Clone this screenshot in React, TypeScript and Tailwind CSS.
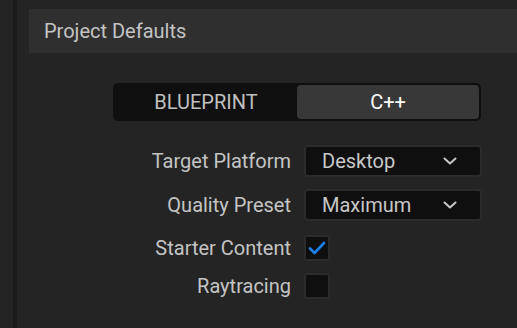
import { useState } from "react";

type Row = { label: string; kind: "select" | "check"; value?: string; checked?: boolean; space: string };

const rows: Row[] = [
  { label: "Target Platform", kind: "select", value: "Desktop", space: "mt-[24px]" },
  { label: "Quality Preset", kind: "select", value: "Maximum", space: "mt-[12px]" },
  { label: "Starter Content", kind: "check", checked: true, space: "mt-[14px]" },
  { label: "Raytracing", kind: "check", checked: false, space: "mt-[12px]" },
];

function Chevron() {
  return (
    <svg width="14" height="8" viewBox="0 0 14 8" fill="none">
      <path d="M1.5 1.5 L7 6.5 L12.5 1.5" stroke="#c8c8c8" strokeWidth="2" strokeLinecap="round" strokeLinejoin="round" />
    </svg>
  );
}

function Check() {
  return (
    <svg width="18" height="14" viewBox="0 0 18 14" fill="none">
      <path d="M2 7.5 L6.5 12 L16 2" stroke="#1a7fe8" strokeWidth="2.6" strokeLinecap="round" strokeLinejoin="round" />
    </svg>
  );
}

export default function App() {
  const [mode, setMode] = useState<"bp" | "cpp">("cpp");

  return (
    <div className="w-[517px] h-[328px] bg-[#242424] flex overflow-hidden font-['Roboto',sans-serif]">
      {/* left gutter */}
      <div className="w-[13px] shrink-0" />
      <div className="w-[4px] shrink-0 bg-[#1b1b1b]" />
      <div className="flex-1 pl-[12px] pt-[9px]">
        {/* Section header */}
        <div className="h-[44px] bg-[#2f2f2f] flex items-center pl-[15px] text-[20px] leading-none text-[#c4c4c4]">
          Project Defaults
        </div>

        {/* Blueprint / C++ toggle */}
        <div className="mt-[30px] ml-[84px] w-[368px] h-[38px] bg-[#0f0f0f] rounded-[5px] flex p-[2px]">
          <button
            onClick={() => setMode("bp")}
            className={`flex-1 rounded-[4px] text-[20px] leading-none ${mode === "bp" ? "bg-[#383838] text-white" : "text-[#c0c0c0]"}`}
          >
            BLUEPRINT
          </button>
          <button
            onClick={() => setMode("cpp")}
            className={`flex-1 rounded-[4px] text-[20px] leading-none ${mode === "cpp" ? "bg-[#383838] text-white" : "text-[#c0c0c0]"}`}
          >
            C++
          </button>
        </div>

        {/* Settings */}
        <div className="flex flex-col">
          {rows.map((r) => (
            <div key={r.label} className={`${r.space} flex items-center gap-[13px]`}>
              <div className="w-[262px] text-right text-[20px] leading-none text-[#c4c4c4]">{r.label}</div>
              {r.kind === "select" ? (
                <div className="w-[178px] h-[32px] bg-[#0f0f0f] border-2 border-[#2b2b2b] rounded-[4px] flex items-center justify-between pl-[16px] pr-[23px] text-[20px] leading-none text-[#c8c8c8]">
                  <span>{r.value}</span>
                  <Chevron />
                </div>
              ) : (
                <div className="w-[26px] h-[26px] bg-[#0f0f0f] border-2 border-[#2b2b2b] rounded-[3px] flex items-center justify-center">
                  {r.checked && <Check />}
                </div>
              )}
            </div>
          ))}
        </div>
      </div>
    </div>
  );
}
